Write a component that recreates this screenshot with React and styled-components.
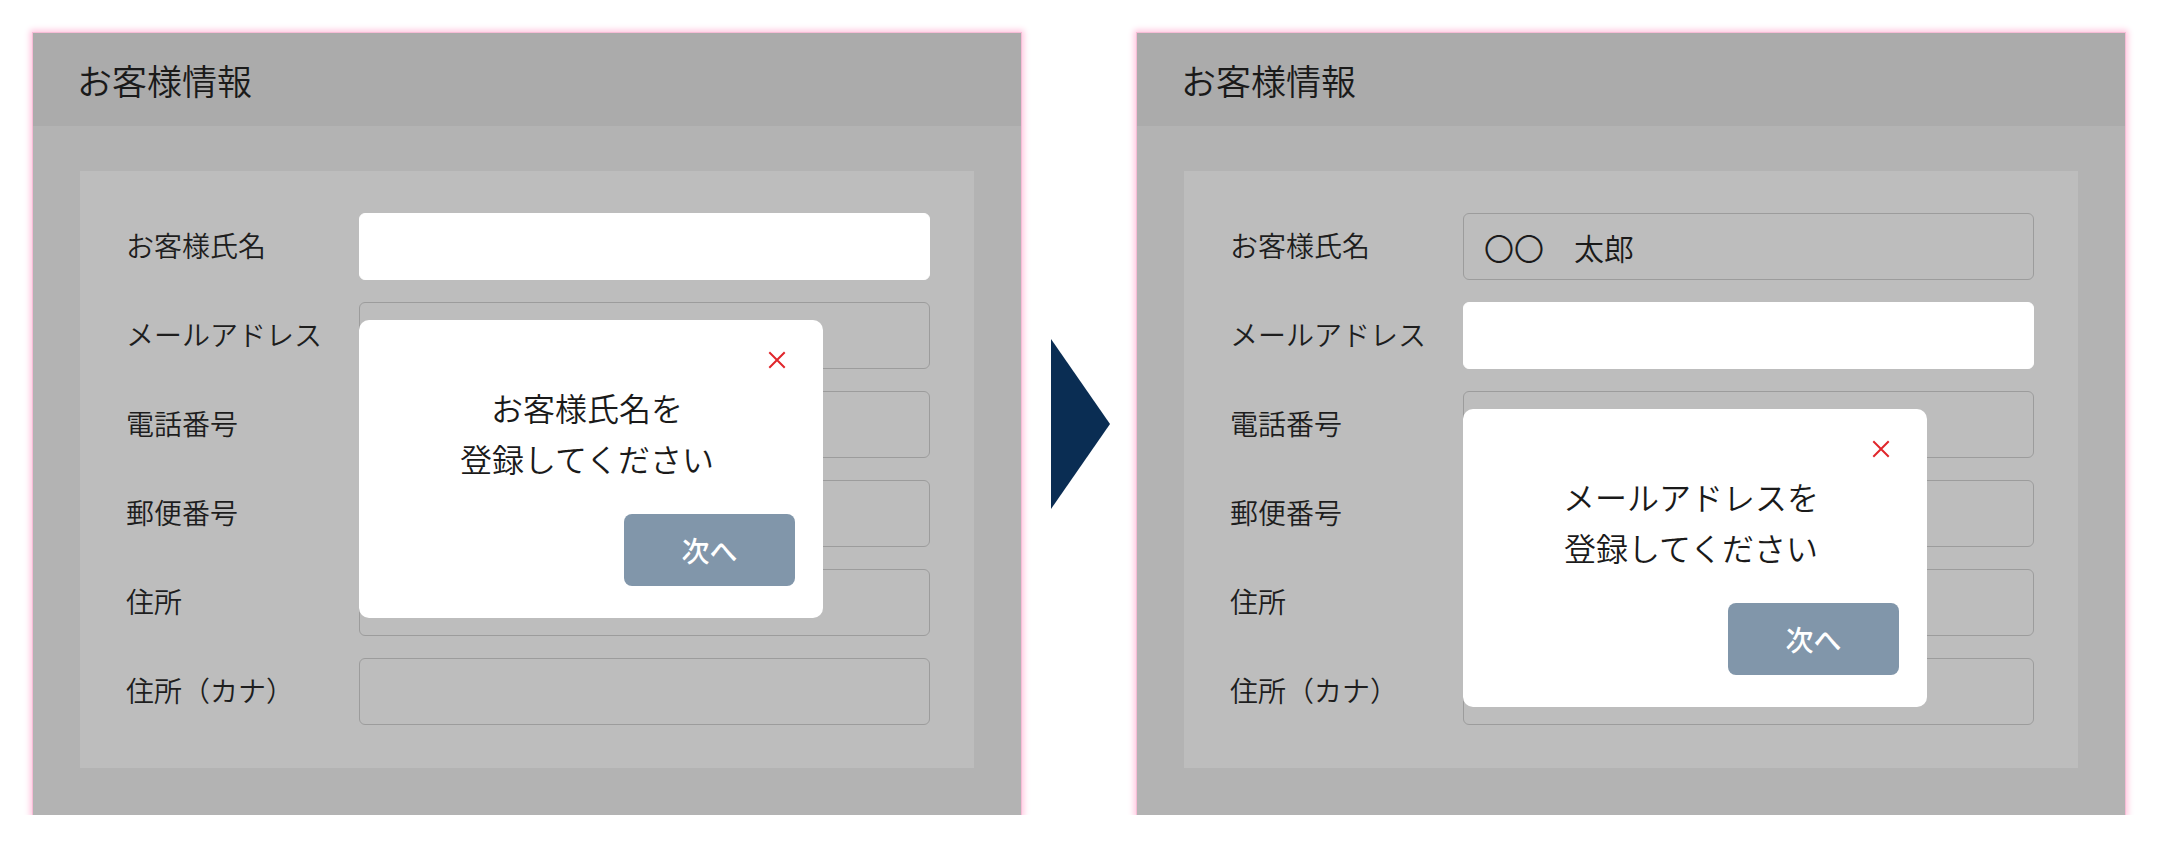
import React from "react";
import styled, { createGlobalStyle } from "styled-components";

const GlobalStyle = createGlobalStyle`
  html, body {
    margin: 0;
    padding: 0;
    background: #ffffff;
  }
  body {
    font-family: "Noto Sans CJK JP", "Noto Sans", sans-serif;
    font-weight: 350;
    color: #1c1c1c;
  }
`;

const FIELDS = [
  "お客様氏名",
  "メールアドレス",
  "電話番号",
  "郵便番号",
  "住所",
  "住所（カナ）",
];

const STEPS = [
  { active: 0, values: {}, message: ["お客様氏名を", "登録してください"] },
  {
    active: 1,
    values: { 0: "〇〇　太郎" },
    message: ["メールアドレスを", "登録してください"],
  },
];

const Page = styled.div`
  display: flex;
  align-items: center;
  padding: 33px 0 0 33px;
  width: 2160px;
  box-sizing: border-box;
`;

const Panel = styled.section`
  width: 988px;
  height: 782px;
  display: flex;
  flex-direction: column;
  background: #b3b3b3;
  box-shadow: 0 0 0 1px #f6bcd6, 0 0 6px 3px #ffc6df;
`;

const Header = styled.div`
  height: 93px;
  flex-shrink: 0;
  display: flex;
  align-items: center;
  padding: 0 0 0 44px;
  box-sizing: border-box;
  background: #ababab;
  font-size: 35px;
  color: #1a1a1a;
`;

const Body = styled.div`
  flex: 1;
  padding: 45px 47px 48px;
`;

const Card = styled.div`
  position: relative;
  display: flex;
  flex-direction: column;
  gap: 22px;
  padding: 42px 44px 43px 46px;
  background: #bdbdbd;
`;

const Row = styled.div`
  display: flex;
  align-items: center;
  height: 67px;
`;

const Label = styled.div`
  width: 233px;
  flex-shrink: 0;
  padding-bottom: 4px;
  font-size: 28px;
  color: #1e1e1e;
`;

const Field = styled.div`
  flex: 1;
  height: 67px;
  box-sizing: border-box;
  display: flex;
  align-items: center;
  padding: 0 20px;
  border-radius: 6px;
  font-size: 30px;
  color: #1a1a1a;
  background: ${(props) => (props.$active ? "#ffffff" : "transparent")};
  border: 1px solid ${(props) => (props.$active ? "#ffffff" : "#9c9c9c")};
`;

// dialog sits over the field below the one being asked for
const Modal = styled.div`
  position: absolute;
  left: 279px;
  top: ${(props) => 42 + props.$row * 89 + 18}px;
  width: 464px;
  height: 298px;
  box-sizing: border-box;
  display: flex;
  flex-direction: column;
  padding: 26px 28px 32px;
  background: #ffffff;
  border-radius: 10px;
`;

const CloseBtn = styled.button`
  align-self: flex-end;
  width: 28px;
  height: 28px;
  margin-right: 4px;
  padding: 0;
  border: none;
  background: transparent;
  display: flex;
  align-items: center;
  justify-content: center;
`;

const Message = styled.div`
  margin-top: 8px;
  padding: 0 8px 4px 0;
  text-align: center;
  font-size: 32px;
  line-height: 51px;
  color: #1a1a1a;
`;

const NextBtn = styled.button`
  align-self: flex-end;
  margin-top: 26px;
  width: 171px;
  height: 72px;
  border: none;
  border-radius: 8px;
  background: #8196aa;
  color: #ffffff;
  font-family: "Noto Sans CJK JP", "Noto Sans", sans-serif;
  font-size: 28px;
  font-weight: 500;
`;

const ArrowWrap = styled.div`
  width: 116px;
  display: flex;
  justify-content: center;
  padding-left: 3px;
  box-sizing: border-box;
`;

const CloseIcon = () => (
  <svg width="18" height="18" viewBox="0 0 18 18">
    <path
      d="M2 2 L16 16 M16 2 L2 16"
      stroke="#e0262b"
      strokeWidth="2"
      strokeLinecap="square"
    />
  </svg>
);

const Step = ({ active, values, message }) => (
  <Panel>
    <Header>お客様情報</Header>
    <Body>
      <Card>
        {FIELDS.map((label, i) => (
          <Row key={label}>
            <Label>{label}</Label>
            <Field $active={i === active}>{values[i] || ""}</Field>
          </Row>
        ))}
        <Modal $row={active + 1}>
          <CloseBtn type="button" aria-label="close">
            <CloseIcon />
          </CloseBtn>
          <Message>
            {message.map((line) => (
              <div key={line}>{line}</div>
            ))}
          </Message>
          <NextBtn type="button">次へ</NextBtn>
        </Modal>
      </Card>
    </Body>
  </Panel>
);

const App = () => (
  <>
    <GlobalStyle />
    <Page>
      <Step {...STEPS[0]} />
      <ArrowWrap>
        <svg width="59" height="170" viewBox="0 0 59 170">
          <polygon points="0,0 59,85 0,170" fill="#0a2d53" />
        </svg>
      </ArrowWrap>
      <Step {...STEPS[1]} />
    </Page>
  </>
);

export default App;
